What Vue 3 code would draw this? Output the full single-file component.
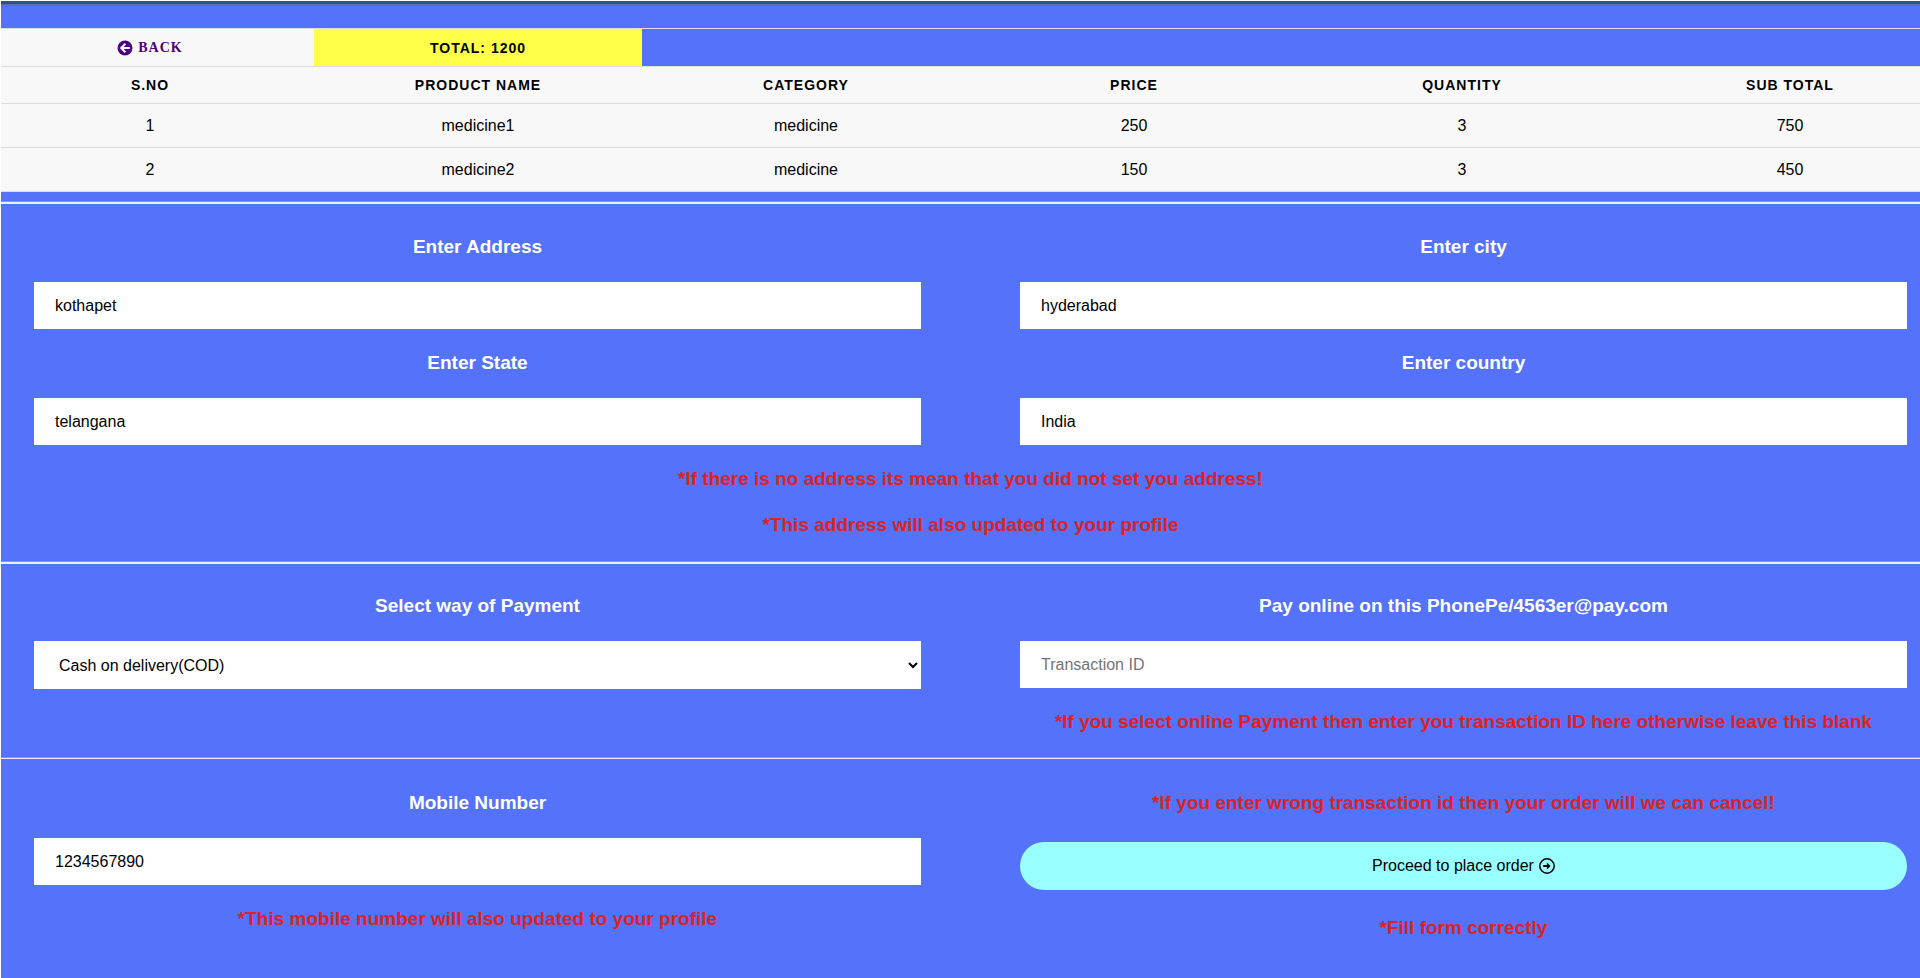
<script setup>
import { ref } from 'vue'

const columns = ['S.No', 'Product Name', 'Category', 'Price', 'Quantity', 'Sub Total']
const items = [
  { name: 'medicine1', category: 'medicine', price: 250, quantity: 3 },
  { name: 'medicine2', category: 'medicine', price: 150, quantity: 3 },
]
const total = items.reduce((sum, item) => sum + item.price * item.quantity, 0)

const address = ref('kothapet')
const city = ref('hyderabad')
const region = ref('telangana')
const country = ref('India')
const payment = ref('cod')
const transaction = ref('')
const mobile = ref('1234567890')
</script>

<template>
  <main class="page">
    <div class="topbar"></div>

    <div class="cart">
      <table>
        <thead>
          <tr class="summary">
            <th>
              <a class="back" href="#">
                <svg class="icon" viewBox="0 0 16 16" aria-hidden="true">
                  <circle cx="8" cy="8" r="7.5" fill="currentColor" />
                  <path d="M12.8 8H4.4M8.4 3.8L4.2 8l4.2 4.2" fill="none" stroke="#f8f8f8" stroke-width="2" />
                </svg>
                Back
              </a>
            </th>
            <th class="total">Total: {{ total }}</th>
          </tr>
          <tr class="heads">
            <th v-for="column in columns" :key="column" scope="col">{{ column }}</th>
          </tr>
        </thead>
        <tbody>
          <tr v-for="(item, index) in items" :key="item.name">
            <td>{{ index + 1 }}</td>
            <td>{{ item.name }}</td>
            <td>{{ item.category }}</td>
            <td>{{ item.price }}</td>
            <td>{{ item.quantity }}</td>
            <td>{{ item.price * item.quantity }}</td>
          </tr>
        </tbody>
      </table>
    </div>

    <form @submit.prevent>
      <section class="address">
        <div class="field">
          <label for="address">Enter Address</label>
          <input id="address" v-model="address" type="text" />
        </div>
        <div class="field">
          <label for="city">Enter city</label>
          <input id="city" v-model="city" type="text" />
        </div>
        <div class="field">
          <label for="state">Enter State</label>
          <input id="state" v-model="region" type="text" />
        </div>
        <div class="field">
          <label for="country">Enter country</label>
          <input id="country" v-model="country" type="text" />
        </div>
        <p class="note wide">*If there is no address its mean that you did not set you address!</p>
        <p class="note wide">*This address will also updated to your profile</p>
      </section>

      <section class="payment">
        <div class="field">
          <label for="payment">Select way of Payment</label>
          <select id="payment" v-model="payment">
            <option value="cod">Cash on delivery(COD)</option>
            <option value="online">Online Payment</option>
          </select>
        </div>
        <div class="field">
          <label for="transaction">Pay online on this PhonePe/4563er@pay.com</label>
          <input id="transaction" v-model="transaction" type="text" placeholder="Transaction ID" />
          <p class="note below">*If you select online Payment then enter you transaction ID here otherwise leave this blank</p>
        </div>
      </section>

      <section class="confirm">
        <div class="field">
          <label for="mobile">Mobile Number</label>
          <input id="mobile" v-model="mobile" type="text" />
          <p class="note below">*This mobile number will also updated to your profile</p>
        </div>
        <div class="field">
          <p class="note">*If you enter wrong transaction id then your order will we can cancel!</p>
          <button type="submit">
            Proceed to place order
            <svg class="icon" viewBox="0 0 16 16" aria-hidden="true">
              <circle cx="8" cy="8" r="7.2" fill="none" stroke="currentColor" stroke-width="1.5" />
              <path d="M4.2 7.1h3.7V4.6L11.6 8l-3.7 3.4V8.9H4.2z" fill="currentColor" />
            </svg>
          </button>
          <p class="note">*Fill form correctly</p>
        </div>
      </section>
    </form>
  </main>
</template>

<style>
body {
  background: #5472fa;
}
</style>

<style scoped>
.page {
  box-sizing: border-box;
  min-height: 100vh;
  border-top: 1px solid #fff;
  border-left: 1px solid #fff;
  background: #5472fa;
  font-family: "Liberation Sans", Arial, sans-serif;
  font-size: 16px;
  color: #000;
}

.topbar {
  height: 3px;
  margin-bottom: 22px;
  background: #304e94;
  border-bottom: 2px solid #5674a8;
}

.cart {
  overflow: hidden;
}

table {
  width: calc(100% + 49px);
  margin-left: -15px;
  table-layout: fixed;
  border-collapse: collapse;
}

tr {
  height: 44px;
  border-top: 1px solid #ddd;
}

.summary {
  height: 38px;
}

.heads {
  height: 37px;
}

tbody tr:last-child {
  border-bottom: 1px solid #ddd;
}

th,
td {
  padding: 0;
  background: #f8f8f8;
  text-align: center;
}

th {
  font-size: 14px;
  letter-spacing: 1px;
  text-transform: uppercase;
}

.total {
  background: #ffff49;
}

.back {
  display: inline-flex;
  align-items: center;
  gap: 5px;
  font-family: "Liberation Serif", "Times New Roman", serif;
  font-size: 14px;
  letter-spacing: 1px;
  color: #4b0082;
  text-decoration: none;
  vertical-align: middle;
}

.icon {
  width: 16px;
  height: 16px;
}

form {
  margin-top: 9px;
}

section {
  display: grid;
  grid-template-columns: 1fr 1fr;
  column-gap: 99px;
  row-gap: 22px;
  border-top: 1px solid #999;
  padding: 31px 13px 24px 33px;
  box-shadow: inset 0 2px #eee;
}

.address {
  padding-top: 33px;
}

.payment {
  padding-top: 32px;
  padding-bottom: 23px;
}

.confirm {
  padding-top: 33px;
  box-shadow: inset 0 1px #eee;
}

.field {
  display: flex;
  flex-direction: column;
  min-width: 0;
}

label,
.note {
  margin: 0;
  font-size: 19px;
  font-weight: bold;
  line-height: 24px;
  text-align: center;
}

label {
  margin-bottom: 23px;
  color: #fff;
}

.note {
  color: #dc2224;
}

.wide {
  grid-column: 1 / -1;
}

.below {
  margin-top: 22px;
}

input,
select,
button {
  box-sizing: border-box;
  width: 100%;
  border: 0;
  border-radius: 0;
  font-family: inherit;
  font-size: 16px;
  color: #000;
}

input,
select {
  height: 47px;
  padding: 0 21px;
  background: #fff;
}

input::placeholder {
  color: #757575;
}

select {
  height: 48px;
}

button {
  display: flex;
  align-items: center;
  justify-content: center;
  gap: 5px;
  height: 48px;
  margin: 27px 0 26px;
  border-radius: 24px;
  background: #99ffff;
}
</style>
